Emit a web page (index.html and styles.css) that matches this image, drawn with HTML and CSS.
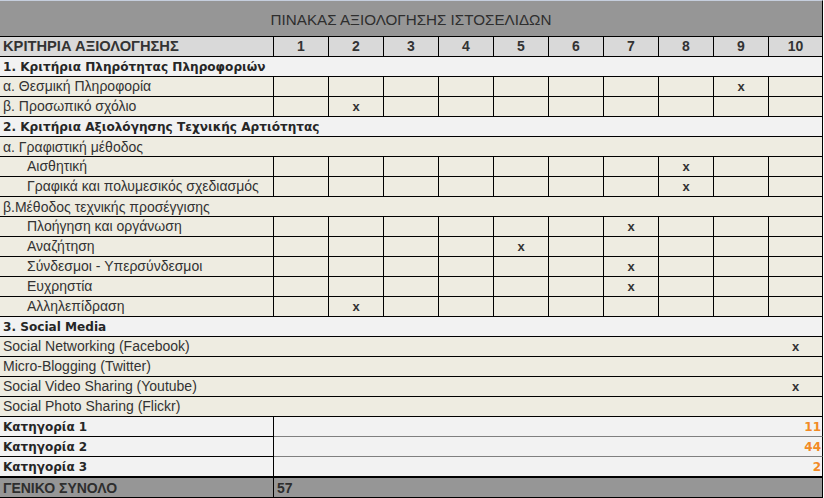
FILE: index.html
```html
<!DOCTYPE html>
<html lang="el">
<head>
<meta charset="utf-8">
<title>Πίνακας αξιολόγησης</title>
<link rel="stylesheet" href="styles.css">
</head>
<body>
<div class="sheet">
  <div class="title">ΠΙΝΑΚΑΣ ΑΞΙΟΛΟΓΗΣΗΣ ΙΣΤΟΣΕΛΙΔΩΝ</div>

  <div class="c head lbl">ΚΡΙΤΗΡΙΑ ΑΞΙΟΛΟΓΗΣΗΣ</div>
  <div class="c head">1</div><div class="c head">2</div><div class="c head">3</div><div class="c head">4</div><div class="c head">5</div><div class="c head">6</div><div class="c head">7</div><div class="c head">8</div><div class="c head">9</div><div class="c head">10</div>

  <div class="sec">1. Κριτήρια Πληρότητας Πληροφοριών</div>

  <div class="c lbl">α. Θεσμική Πληροφορία</div>
  <div class="c"></div><div class="c"></div><div class="c"></div><div class="c"></div><div class="c"></div><div class="c"></div><div class="c"></div><div class="c"></div><div class="c">x</div><div class="c"></div>

  <div class="c lbl">β. Προσωπικό σχόλιο</div>
  <div class="c"></div><div class="c">x</div><div class="c"></div><div class="c"></div><div class="c"></div><div class="c"></div><div class="c"></div><div class="c"></div><div class="c"></div><div class="c"></div>

  <div class="sec">2. Κριτήρια Αξιολόγησης Τεχνικής Αρτιότητας</div>
  <div class="sub">α. Γραφιστική μέθοδος</div>

  <div class="c lbl ind">Αισθητική</div>
  <div class="c"></div><div class="c"></div><div class="c"></div><div class="c"></div><div class="c"></div><div class="c"></div><div class="c"></div><div class="c">x</div><div class="c"></div><div class="c"></div>

  <div class="c lbl ind">Γραφικά και πολυμεσικός σχεδιασμός</div>
  <div class="c"></div><div class="c"></div><div class="c"></div><div class="c"></div><div class="c"></div><div class="c"></div><div class="c"></div><div class="c">x</div><div class="c"></div><div class="c"></div>

  <div class="sub">β.Μέθοδος τεχνικής προσέγγισης</div>

  <div class="c lbl ind">Πλοήγηση και οργάνωση</div>
  <div class="c"></div><div class="c"></div><div class="c"></div><div class="c"></div><div class="c"></div><div class="c"></div><div class="c">x</div><div class="c"></div><div class="c"></div><div class="c"></div>

  <div class="c lbl ind">Αναζήτηση</div>
  <div class="c"></div><div class="c"></div><div class="c"></div><div class="c"></div><div class="c">x</div><div class="c"></div><div class="c"></div><div class="c"></div><div class="c"></div><div class="c"></div>

  <div class="c lbl ind">Σύνδεσμοι - Υπερσύνδεσμοι</div>
  <div class="c"></div><div class="c"></div><div class="c"></div><div class="c"></div><div class="c"></div><div class="c"></div><div class="c">x</div><div class="c"></div><div class="c"></div><div class="c"></div>

  <div class="c lbl ind">Ευχρηστία</div>
  <div class="c"></div><div class="c"></div><div class="c"></div><div class="c"></div><div class="c"></div><div class="c"></div><div class="c">x</div><div class="c"></div><div class="c"></div><div class="c"></div>

  <div class="c lbl ind">Αλληλεπίδραση</div>
  <div class="c"></div><div class="c">x</div><div class="c"></div><div class="c"></div><div class="c"></div><div class="c"></div><div class="c"></div><div class="c"></div><div class="c"></div><div class="c"></div>

  <div class="sec">3. Social Media</div>

  <div class="sm lbl">Social Networking (Facebook)</div>
  <div class="sm"></div><div class="sm"></div><div class="sm"></div><div class="sm"></div><div class="sm"></div><div class="sm"></div><div class="sm"></div><div class="sm"></div><div class="sm"></div><div class="sm last">x</div>

  <div class="sm lbl">Micro-Blogging (Twitter)</div>
  <div class="sm"></div><div class="sm"></div><div class="sm"></div><div class="sm"></div><div class="sm"></div><div class="sm"></div><div class="sm"></div><div class="sm"></div><div class="sm"></div><div class="sm last"></div>

  <div class="sm lbl">Social Video Sharing (Youtube)</div>
  <div class="sm"></div><div class="sm"></div><div class="sm"></div><div class="sm"></div><div class="sm"></div><div class="sm"></div><div class="sm"></div><div class="sm"></div><div class="sm"></div><div class="sm last">x</div>

  <div class="sm lbl">Social Photo Sharing (Flickr)</div>
  <div class="sm"></div><div class="sm"></div><div class="sm"></div><div class="sm"></div><div class="sm"></div><div class="sm"></div><div class="sm"></div><div class="sm"></div><div class="sm"></div><div class="sm last"></div>

  <div class="cat">Κατηγορία 1</div>
  <div class="catv">11</div>
  <div class="cat">Κατηγορία 2</div>
  <div class="catv">44</div>
  <div class="cat lastcat">Κατηγορία 3</div>
  <div class="catv lastcat">2</div>

  <div class="foot">ΓΕΝΙΚΟ ΣΥΝΟΛΟ</div>
  <div class="footv">57</div>
</div>
</body>
</html>
```

FILE: styles.css
```css
html, body {
  margin: 0;
  padding: 0;
  background: #ffffff;
}

.sheet {
  width: 823px;
  display: grid;
  grid-template-columns: 274px repeat(9, 55px) 54px;
  grid-template-rows: 37px repeat(22, 20px) 21px;
  font-family: "Liberation Sans", Arial, sans-serif;
  font-size: 14px;
  color: #333333;
}

.sheet > div {
  box-sizing: border-box;
  white-space: nowrap;
  overflow: hidden;
  display: flex;
  align-items: center;
}

.title {
  grid-column: 1 / -1;
  background: #969696;
  border-top: 1px solid #c5cedd;
  border-right: 1px solid #000;
  border-bottom: 1px solid #000;
  justify-content: center;
  font-size: 15.2px;
  color: #2e2e2e;
  padding-top: 1px;
}

.c {
  border-right: 1px solid #000;
  border-bottom: 1px solid #000;
  background: #eeece1;
  justify-content: center;
  font-weight: bold;
  font-size: 13px;
  padding-bottom: 1px;
}

.c.lbl, .sm.lbl {
  justify-content: flex-start;
  font-weight: normal;
  font-size: 14px;
  padding-left: 3px;
}

.c.ind {
  padding-left: 27px;
}

.c.head {
  background: #d9d9d9;
  font-size: 14px;
  font-weight: bold;
}

.c.head.lbl {
  font-weight: bold;
  font-size: 14.7px;
}

.sec {
  grid-column: 1 / -1;
  background: #f2f2f2;
  border-right: 1px solid #000;
  border-bottom: 1px solid #000;
  padding-left: 3px;
  font-family: "DejaVu Sans", Verdana, sans-serif;
  font-weight: bold;
  font-size: 12.1px;
  color: #262626;
}

.sub {
  grid-column: 1 / -1;
  background: #eeece1;
  border-right: 1px solid #000;
  border-bottom: 1px solid #000;
  padding-left: 3px;
}

.sm {
  background: #eeece1;
  border-bottom: 1px solid #000;
  justify-content: center;
  font-weight: bold;
  font-size: 13px;
  padding-bottom: 1px;
}

.sm.last {
  border-right: 1px solid #000;
}

.cat {
  background: #f2f2f2;
  border-right: 1px solid #000;
  border-bottom: 1px solid #000;
  padding-left: 3px;
  font-family: "DejaVu Sans", Verdana, sans-serif;
  font-weight: bold;
  font-size: 12px;
  color: #262626;
}

.catv {
  grid-column: 2 / -1;
  background: #f2f2f2;
  border-right: 1px solid #000;
  border-bottom: 1px solid #808080;
  justify-content: flex-end;
  padding-right: 1px;
  font-family: "DejaVu Sans", Verdana, sans-serif;
  font-weight: bold;
  font-size: 12px;
  color: #f28a24;
}

.catv.lastcat {
  border-bottom-color: #000;
}

.foot, .footv {
  background: #969696;
  border-top: 1px solid #000;
  border-bottom: 1px solid #000;
  font-weight: bold;
  font-size: 14px;
  color: #2e2e2e;
}

.foot {
  border-right: 1px solid #000;
  padding-left: 3px;
}

.footv {
  grid-column: 2 / -1;
  border-right: 1px solid #000;
  padding-left: 3px;
}
```
